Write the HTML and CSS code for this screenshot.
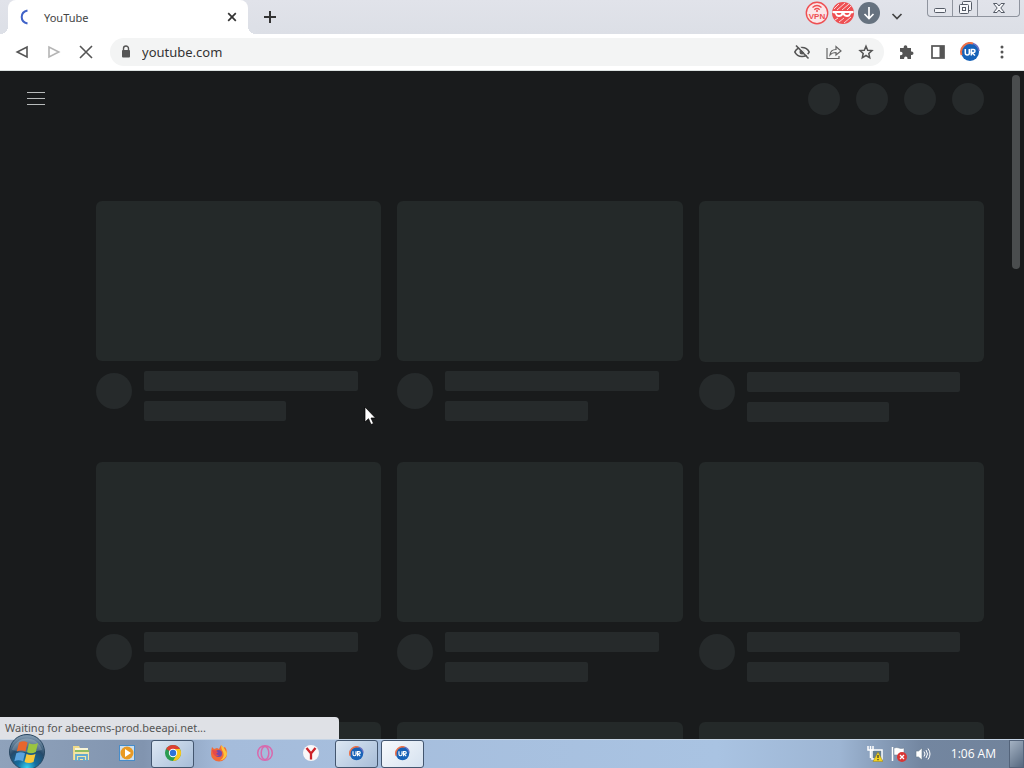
FILE: index.html
```html
<!DOCTYPE html>
<html lang="en">
<head>
<meta charset="utf-8">
<meta name="viewport" content="width=device-width, initial-scale=1">
<title>YouTube</title>
<link rel="stylesheet" href="styles.css">
</head>
<body>
<svg class="defs" aria-hidden="true">
  <defs>
    <symbol id="ur" viewBox="0 0 20 20">
      <circle cx="10" cy="10" r="9" fill="#1762b8"/>
      <path d="M1.600 13A9 9 0 0 1 13 1.500" fill="none" stroke="#ee7148" stroke-width="2"/>
      <path d="M13 1.500A9 9 0 0 1 19 9" fill="none" stroke="#6b6fc0" stroke-width="1.500"/>
      <path d="M5.300 7v4q0 2 2 2t2-2V7M11.300 13.500V7.500h2.200q1.500 0 1.500 1.500t-1.500 1.500h-2l3.500 3" fill="none" stroke="#fff" stroke-width="1.500"/>
    </symbol>
  </defs>
</svg>

<header class="tabstrip">
  <div class="tab">
    <svg class="spinner" viewBox="0 0 16 16"><path d="M7.500 1.500q-5.800 1.200-5.800 6.500t5.800 6.500" fill="none" stroke="#3f62c8" stroke-width="2"/></svg>
    <span class="tab-title">YouTube</span>
    <button class="tab-close" aria-label="Close tab"><svg viewBox="0 0 16 16"><path d="M4.200 4.200l7.600 7.600M11.800 4.200l-7.600 7.600" stroke="#333" stroke-width="1.700"/></svg></button>
  </div>
  <button class="tab-new" aria-label="New tab"><svg viewBox="0 0 16 16"><path d="M8 2v12M2 8h12" stroke="#333" stroke-width="2"/></svg></button>
  <div class="badges">
    <button aria-label="VPN"><svg viewBox="0 0 24 24"><circle cx="12" cy="12" r="10.700" fill="#fbe6e8" stroke="#ee4f52" stroke-width="1.400"/><path d="M7.500 6.500q4.500-4 9 0M9.300 8.700q2.700-2.400 5.400 0" fill="none" stroke="#ee4f52" stroke-width="1.300"/><circle cx="12" cy="10" r="1" fill="#ee4f52"/><text class="vpn" x="12" y="18" text-anchor="middle">VPN</text></svg></button>
    <button aria-label="Incognito"><svg viewBox="0 0 24 24"><circle cx="12" cy="12" r="11" fill="#ee4f52"/><path d="M3 8l5-5M6 9l8-7M11 9l7-6M16 9l4-4M4 19l3-2M8 21l5-4M13 22l7-6" stroke="#fbd6d8" stroke-width="1"/><path d="M1.500 10h21v2l-2.500.5q-.8 3.500-4 3.500-2.500 0-4-2-1.500 2-4 2-3.200 0-4-3.500L1.500 12z" fill="#fff"/><path d="M5.500 12h5q-.3 2-2.500 2t-2.500-2zM18.500 12h-5q.3 2 2.500 2t2.500-2z" fill="#ee4f52"/></svg></button>
    <button aria-label="Download"><svg viewBox="0 0 24 24"><circle cx="12" cy="12" r="11" fill="#66727f"/><path d="M12 6v11M7.500 13l4.500 4.500 4.500-4.500" fill="none" stroke="#fff" stroke-width="1.700"/></svg></button>
  </div>
  <button class="tab-search" aria-label="Search tabs"><svg viewBox="0 0 16 16"><path d="M3.500 6l4.500 4.500L12.500 6" fill="none" stroke="#444" stroke-width="1.700"/></svg></button>
  <div class="window-controls">
    <button aria-label="Minimize"><svg viewBox="0 0 16 16"><rect x="2.500" y="8.500" width="11" height="4" rx="1" fill="#f6f7fa" stroke="#555b66"/></svg></button>
    <button aria-label="Restore"><svg viewBox="0 0 16 16"><rect x="5.500" y="1.500" width="9" height="9" rx="1" fill="#f6f7fa" stroke="#555b66"/><rect x="2.500" y="4.500" width="9" height="9" rx="1" fill="#f6f7fa" stroke="#555b66"/><rect x="5.500" y="7.500" width="3" height="3" fill="#fff" stroke="#555b66"/></svg></button>
    <button class="win-close" aria-label="Close"><svg viewBox="0 0 16 16"><path d="M2.500 3.500h3.500l2 2.500 2-2.500h3.500l-3.700 4.500 3.700 4.500h-3.500l-2-2.500-2 2.500H2.500l3.700-4.500z" fill="#f6f7fa" stroke="#555b66"/></svg></button>
  </div>
</header>

<nav class="toolbar">
  <button class="tool" aria-label="Back"><svg viewBox="0 0 16 16"><path d="M13 3v10L3.200 8z" fill="none" stroke="#555" stroke-width="1.600"/></svg></button>
  <button class="tool" aria-label="Forward"><svg viewBox="0 0 16 16"><path d="M3 3v10l9.800-5z" fill="none" stroke="#b5b5b5" stroke-width="1.600"/></svg></button>
  <button class="tool" aria-label="Stop"><svg viewBox="0 0 16 16"><path d="M2 2l12 12M14 2L2 14" stroke="#555" stroke-width="1.600"/></svg></button>
  <div class="address">
    <svg class="lock" viewBox="0 0 16 16"><path d="M5.500 7V4.500a2.500 2.500 0 0 1 5 0V7" fill="none" stroke="#555" stroke-width="1.400"/><rect x="4" y="6" width="8" height="7.500" rx="1" fill="#555"/></svg>
    <input class="url" aria-label="Address" value="youtube.com">
    <button class="tool" aria-label="Tracking blocked"><svg viewBox="0 0 16 16"><path d="M.8 8Q3 3.500 8 3.500T15.200 8Q13 12.500 8 12.500T.8 8z" fill="none" stroke="#555" stroke-width="1.700"/><circle cx="8" cy="8" r="2.500" fill="#555"/><path d="M3.500 1L15 12.500" stroke="#f3f4f4" stroke-width="1.500"/><path d="M2 1.500l12.500 13" stroke="#555" stroke-width="1.600"/></svg></button>
    <button class="tool" aria-label="Share"><svg viewBox="0 0 16 16"><path d="M1 4v10.500h12V12M4 11q.5-5.500 6-5.500V2.500l5 4.500-5 4V8.500Q6 8.500 4 11z" fill="none" stroke="#666" stroke-width="1.200"/></svg></button>
    <button class="tool" aria-label="Bookmark"><svg viewBox="0 0 16 16"><path d="M8 2.200l1.700 4 4.300.4-3.200 2.900.9 4.300L8 11.500l-3.700 2.300.9-4.300L2 6.600l4.300-.4z" fill="none" stroke="#555" stroke-width="1.500"/></svg></button>
  </div>
  <button class="tool" aria-label="Extensions"><svg viewBox="0 0 16 16"><path d="M2 4h3.700V3a1.800 1.800 0 0 1 3.600 0v1H13v3.500h.7a1.800 1.800 0 0 1 0 3.600H13V15H9.500v-.8a1.700 1.700 0 0 0-3.400 0v.8H2v-3.800h.9a1.700 1.700 0 0 0 0-3.400H2z" fill="#555"/></svg></button>
  <button class="tool" aria-label="Side panel"><svg viewBox="0 0 16 16"><rect x="2" y="2" width="12" height="12" fill="none" stroke="#555" stroke-width="1.700"/><path d="M9.500 2H14v12H9.500z" fill="#555"/></svg></button>
  <button class="tool profile" aria-label="Profile"><svg><use href="#ur"/></svg></button>
  <button class="tool" aria-label="Menu"><svg viewBox="0 0 16 16" fill="#555"><circle cx="8" cy="3" r="1.500"/><circle cx="8" cy="8" r="1.500"/><circle cx="8" cy="13" r="1.500"/></svg></button>
</nav>

<main class="page">
  <div class="masthead">
    <button class="guide" aria-label="Guide"><svg viewBox="0 0 18 14"><path d="M0 .5h18M0 6.500h18M0 12.500h18" stroke="#b8bbbb"/></svg></button>
    <div class="dots"><i></i><i></i><i></i><i></i></div>
  </div>
  <div class="grid">
    <article class="card"><div class="thumb"></div><div class="details"><i class="avatar"></i><div class="lines"><i></i><i></i></div></div></article>
    <article class="card"><div class="thumb"></div><div class="details"><i class="avatar"></i><div class="lines"><i></i><i></i></div></div></article>
    <article class="card"><div class="thumb"></div><div class="details"><i class="avatar"></i><div class="lines"><i></i><i></i></div></div></article>
    <article class="card"><div class="thumb"></div><div class="details"><i class="avatar"></i><div class="lines"><i></i><i></i></div></div></article>
    <article class="card"><div class="thumb"></div><div class="details"><i class="avatar"></i><div class="lines"><i></i><i></i></div></div></article>
    <article class="card"><div class="thumb"></div><div class="details"><i class="avatar"></i><div class="lines"><i></i><i></i></div></div></article>
    <article class="card"><div class="thumb"></div></article>
    <article class="card"><div class="thumb"></div></article>
    <article class="card"><div class="thumb"></div></article>
  </div>
  <div class="scrollbar"></div>
  <div class="status">Waiting for abeecms-prod.beeapi.net...</div>
</main>

<footer class="taskbar">
  <div class="start-slot">
    <button class="start" aria-label="Start"><svg viewBox="0 0 38 38">
      <defs><radialGradient id="orb" cx=".5" cy=".95" r=".9"><stop offset="0" stop-color="#35d3f2"/><stop offset=".3" stop-color="#146d9e"/><stop offset=".65" stop-color="#264a6a"/><stop offset="1" stop-color="#7f98ae"/></radialGradient></defs>
      <circle cx="19" cy="19" r="17.500" fill="url(#orb)" stroke="#294761"/>
      <path d="M4 17a15.500 15.500 0 0 1 30 0q-15 4-30 0z" fill="#fff" opacity=".2"/>
      <path d="M11 9.500q4.500-2.500 8.500 0l-2 9q-4.500-2-8.700 0z" fill="#e8662d"/>
      <path d="M21 10.300q4.500 2 9-.3l-2.200 9q-4.500 2.200-8.800.3z" fill="#9bc540"/>
      <path d="M8.300 20.200q4.500-2 8.700 0l-2 8q-4.500-2-8.700 0z" fill="#5ba3de"/>
      <path d="M18.500 21q4.500 2.200 9 0l-2 8q-4.500 2.200-9 0z" fill="#f8c83a"/>
    </svg></button>
  </div>
  <button class="task" aria-label="Explorer"><svg viewBox="0 0 20 20"><path d="M2 3h6l1 2h8v12H2z" fill="#eed98a"/><path d="M4 5h13v3H4z" fill="#f9f5d8"/><path d="M4 7h14v2H4z" fill="#8fbd63"/><path d="M3 9h15v8H3z" fill="#f3e6a5"/><path d="M5 18v-6h11v6M8 18v-3h5v3" fill="none" stroke="#65a9ce" stroke-width="1.800"/></svg></button>
  <button class="task" aria-label="Media Player"><svg viewBox="0 0 20 20"><rect x="2.500" y="2.500" width="15" height="15" fill="#cfe0ee" stroke="#478cc9"/><circle cx="10" cy="10" r="6.500" fill="#e99a24"/><path d="M8 6v8l6-4z" fill="#fff"/></svg></button>
  <button class="task open" aria-label="Chrome"><svg viewBox="0 0 20 20"><circle cx="10" cy="10" r="8" fill="#2b9c51"/><path d="M10 10L3.100 6A8 8 0 0 1 17 6z" fill="#dd4033"/><path d="M10 10V6h7A8 8 0 0 1 10 18l4-7z" fill="#f8c61c"/><circle cx="10" cy="10" r="4.200" fill="#fff"/><circle cx="10" cy="10" r="3.200" fill="#2d72d9"/></svg></button>
  <button class="task" aria-label="Firefox"><svg viewBox="0 0 20 20"><path d="M3 4l2 2 3-1 2 1 2-4q2 2 2 3l2-1q2.500 3 2 7a8 7.500 0 0 1-16 0Q2 7 3 4z" fill="#f26a38"/><path d="M12 2q5 4 5.500 9 .5-3-.5-6 2 4 .8 7-2 5-7 5.500 5-3 3.500-8Q12 7 12 2z" fill="#fbc43a"/><circle cx="9.500" cy="10.500" r="3.500" fill="#7548a8"/><path d="M3 7l4 .5 2 2-2 1.500 3 1.500q-4 2-6-2z" fill="#e64a4b"/></svg></button>
  <button class="task" aria-label="Opera"><svg viewBox="0 0 20 20"><circle cx="10" cy="10" r="7.300" fill="none" stroke="#d869ad" stroke-width="1.500"/><ellipse cx="10" cy="10" rx="3.800" ry="6.500" fill="none" stroke="#d869ad" stroke-width="1.500"/></svg></button>
  <button class="task" aria-label="Yandex"><svg viewBox="0 0 20 20"><circle cx="10" cy="10" r="8" fill="#f9f7f8"/><path d="M5.500 5l4.500 5.500L14.500 5M10 10v6.500" fill="none" stroke="#cc2229" stroke-width="2.300"/></svg></button>
  <button class="task open" aria-label="UR Browser"><svg class="small"><use href="#ur"/></svg></button>
  <button class="task active" aria-label="UR Browser window"><svg class="small"><use href="#ur"/></svg></button>
  <div class="tray">
    <button aria-label="Network"><svg viewBox="0 0 16 16"><rect x="5" y="4" width="10" height="9" fill="#668092" stroke="#fff" stroke-width="1.500"/><path d="M1 0v4h5V0M3.500 0v4M3.500 4v8" fill="none" stroke="#fff" stroke-width="1.500"/><path d="M11 6l5 9.500H6z" fill="#f5d41d" stroke="#9a8420" stroke-width=".5"/><path d="M11 9v3M11 13v1.200" stroke="#333" stroke-width="1.200"/></svg></button>
    <button aria-label="Action center"><svg viewBox="0 0 16 16"><path d="M1.500 1v14" stroke="#fff" stroke-width="1.500"/><path d="M3 2q3-1 5 0t5 0v7H3z" fill="#fff" stroke="#697b8d" stroke-width=".5"/><circle cx="11" cy="11" r="5" fill="#d93635"/><path d="M9 9l4 4M13 9l-4 4" stroke="#fff" stroke-width="1.300"/></svg></button>
    <button aria-label="Volume"><svg viewBox="0 0 16 16"><path d="M1 5h2.500L7 2v12l-3.500-3H1z" fill="#fff" stroke="#65788a" stroke-width=".6"/><path d="M9 5.500q2 2.500 0 5M11 4q3 4 0 8M13 2.500q4 5.500 0 11" fill="none" stroke="#fff"/></svg></button>
  </div>
  <time class="clock">1:06 AM</time>
  <button class="desktop" aria-label="Show desktop"></button>
</footer>
<svg class="cursor" viewBox="0 0 12 20" aria-hidden="true"><path d="M1 1v15l3.500-3.300L7 18.500l2.500-1L7 12h4.500z" fill="#fff" stroke="#000" stroke-width=".7"/></svg>
</body>
</html>
```
FILE: styles.css
```css
* { box-sizing: border-box; }
body {
  margin: 0;
  height: 100vh;
  display: flex;
  flex-direction: column;
  overflow: hidden;
  position: relative;
  background: #191b1c;
  font-family: "Noto Sans", "Open Sans", sans-serif;
  font-size: 11px;
  color: #444;
}
button {
  display: flex;
  align-items: center;
  justify-content: center;
  flex: none;
  padding: 0;
  border: 0;
  background: none;
}
svg { display: block; width: 16px; height: 16px; flex: none; }
.defs { position: absolute; width: 0; height: 0; }

.tabstrip {
  display: flex;
  align-items: flex-start;
  flex: none;
  height: 34px;
  padding: 0 4px 0 8px;
  background: linear-gradient(#e1e3ea, #dcdfe6);
}
.tab {
  position: relative;
  display: flex;
  align-items: center;
  width: 240px;
  height: 34px;
  padding: 0 8px 0 12px;
  background: #fff;
  border-radius: 8px 8px 0 0;
}
.tab::before, .tab::after {
  content: "";
  position: absolute;
  bottom: 0;
  width: 8px;
  height: 8px;
}
.tab::before { left: -8px; background: radial-gradient(circle at 0 0, #dde0e7 8px, #fff 8px); }
.tab::after { right: -8px; background: radial-gradient(circle at 100% 0, #dde0e7 8px, #fff 8px); }
.tab-title { flex: 1; padding-left: 8px; }
.tab-new { width: 28px; height: 34px; margin-left: 8px; }
.badges { display: flex; gap: 2px; margin: 1px 8px 0 auto; }
.badges svg { width: 24px; height: 24px; }
.vpn { font: bold 8px "Liberation Sans", sans-serif; fill: #ee4f52; }
.tab-search { width: 16px; height: 32px; margin-right: 22px; }
.window-controls {
  display: flex;
  height: 17px;
  border: 1px solid #8f949e;
  border-top: 0;
  border-radius: 0 0 4px 4px;
}
.window-controls button { width: 25px; border-right: 1px solid #8f949e; }
.window-controls .win-close { width: 41px; border-right: 0; }

.toolbar {
  display: flex;
  align-items: center;
  flex: none;
  height: 37px;
  padding: 0 6px;
  background: #fff;
  border-bottom: 1px solid #dce2e1;
}
.tool { width: 32px; height: 28px; }
.profile svg { width: 20px; height: 20px; }
.address {
  flex: 1;
  display: flex;
  align-items: center;
  min-width: 0;
  height: 28px;
  margin: 0 6px 0 8px;
  padding: 0 2px 0 8px;
  border-radius: 14px;
  background: #f3f4f4;
}
.url {
  flex: 1;
  min-width: 0;
  margin-left: 8px;
  padding: 0;
  border: 0;
  outline: 0;
  background: none;
  font: 13px "Noto Sans", sans-serif;
  color: #333;
}

.page {
  position: relative;
  flex: 1;
  min-height: 0;
  overflow: hidden;
  background: #191b1c;
}
.masthead {
  display: flex;
  align-items: center;
  justify-content: space-between;
  height: 56px;
  padding: 0 40px 0 27px;
}
.guide svg { width: 18px; height: 14px; }
.dots { display: flex; gap: 16px; }
.dots i { width: 32px; height: 32px; border-radius: 50%; background: #262a2b; }
.grid {
  display: grid;
  grid-template-columns: repeat(3, 1fr);
  gap: 40px 16px;
  padding: 74px 40px 0 96px;
}
.thumb { aspect-ratio: 16 / 9; border-radius: 6px; background: #242929; }
.details { display: flex; gap: 12px; padding-top: 10px; }
.avatar { flex: none; width: 36px; height: 36px; margin-top: 2px; border-radius: 50%; background: #262a2b; }
.lines { flex: 1; display: flex; flex-direction: column; gap: 10px; }
.lines i { width: 90%; height: 20px; border-radius: 2px; background: #262a2b; }
.lines i:last-child { width: 60%; }
.scrollbar {
  position: absolute;
  top: 4px;
  right: 4px;
  width: 8px;
  height: 29%;
  border-radius: 4px;
  background: #4a4d4e;
}
.status {
  position: absolute;
  left: 0;
  bottom: 0;
  width: 33.1%;
  padding: 0 5px;
  line-height: 22px;
  border-radius: 0 4px 0 0;
  background: #dfe1e6;
  color: #555;
}

.taskbar {
  position: relative;
  display: flex;
  align-items: stretch;
  gap: 3px;
  flex: none;
  height: 29px;
  background: linear-gradient(90deg, #8fa2bb, #8194af 14%, #a5bcdb 22%, #a9c3e2 70%, #9db5d3 82%, #7386a0 90%, #71839b);
  border-top: 1px solid #c5d4e5;
}
.start-slot { position: relative; width: 56px; }
.start { position: absolute; left: 8px; bottom: -3px; }
.start svg { width: 38px; height: 38px; }
.task { width: 43px; padding-bottom: 2px; border-radius: 3px; }
.task svg { width: 20px; height: 20px; }
.task .small { width: 15px; height: 15px; }
.open { border: 1px solid #43566f; background: linear-gradient(135deg, #dce7f3, #a7bdd8); }
.active { border: 1px solid #43566f; background: linear-gradient(135deg, #f7fafd, #d5e1ef); }
.tray { display: flex; gap: 8px; margin: 0 17px 0 auto; }
.clock { font-family: "Open Sans", sans-serif; font-size: 12px; line-height: 28px; margin-right: 10px; color: #fff; }
.desktop {
  width: 15px;
  border: 1px solid #53637a;
  background: linear-gradient(135deg, #a4b2c3, #56687f);
}
.cursor { position: absolute; left: 364px; top: 406px; width: 12px; height: 20px; }
```
